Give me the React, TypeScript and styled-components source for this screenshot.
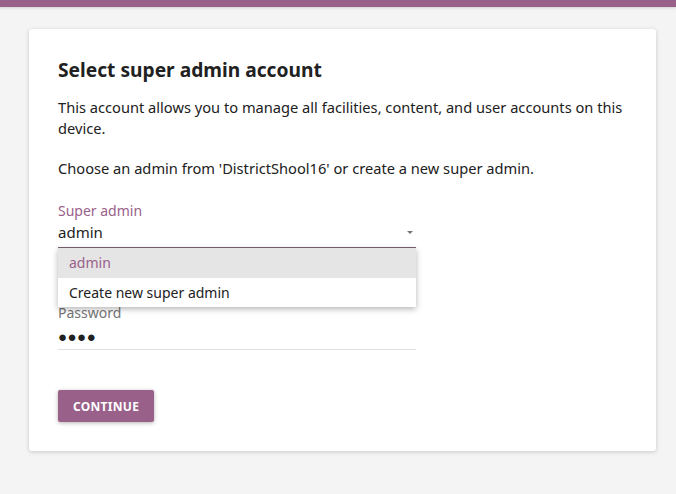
import React from 'react';
import styled, { createGlobalStyle } from 'styled-components';

const GlobalStyle = createGlobalStyle`
  body {
    margin: 0;
    background-color: #f4f4f4;
    font-family: "Noto Sans", "Open Sans", sans-serif;
    color: #212121;
  }
`;

const TopBar = styled.div`
  height: 7px;
  background-color: #996189;
  box-shadow: 0 1px 3px rgba(0, 0, 0, 0.15);
`;

const Page = styled.div`
  padding: 22px 20px 44px 29px;
`;

const Card = styled.div`
  background-color: #fff;
  border-radius: 3px;
  box-shadow: 0 1px 4px rgba(0, 0, 0, 0.18);
  padding: 26px 28px 29px 29px;
`;

const Title = styled.h1`
  margin: 0 0 12px;
  font-size: 19.2px;
  line-height: 30px;
  font-weight: 700;
  color: #212121;
`;

const Paragraph = styled.p<{ $gap?: number }>`
  margin: 0 0 ${p => p.$gap ?? 19}px;
  font-size: 14.65px;
  line-height: 21px;
  color: #212121;
`;

const Field = styled.div<{ $width?: number }>`
  position: relative;
  width: ${p => p.$width ?? 358}px;
`;

const Label = styled.div<{ $active?: boolean }>`
  font-size: 14px;
  line-height: 19px;
  color: ${p => (p.$active ? '#996189' : '#757575')};
`;

const ValueRow = styled.div<{ $active?: boolean }>`
  display: flex;
  align-items: center;
  justify-content: space-between;
  height: 24px;
  padding-bottom: 3px;
  font-size: 15px;
  line-height: 22px;
  color: #212121;
  border-bottom: 1px solid ${p => (p.$active ? '#7a6272' : '#e0e0e0')};
`;

const Caret = styled.span`
  width: 0;
  height: 0;
  margin-right: 3px;
  border-left: 3.5px solid transparent;
  border-right: 3.5px solid transparent;
  border-top: 3.5px solid #757575;
`;

const Menu = styled.ul`
  position: absolute;
  left: 0;
  right: 0;
  top: 47px;
  margin: 0;
  padding: 0;
  list-style: none;
  background-color: #fff;
  box-shadow: 0 2px 6px rgba(0, 0, 0, 0.3);
  z-index: 2;
`;

const MenuItem = styled.li<{ $selected?: boolean }>`
  height: 29.5px;
  padding: 0 11px;
  display: flex;
  align-items: center;
  font-size: 14px;
  color: ${p => (p.$selected ? '#996189' : '#212121')};
  background-color: ${p => (p.$selected ? '#e5e5e5' : '#fff')};
`;

const PasswordField = styled(Field)`
  margin-top: 55px;
`;

const Dots = styled.span`
  padding-top: 4px;
  font-size: 15px;
  letter-spacing: 0.5px;
  color: #212121;
`;

const ContinueButton = styled.button`
  margin-top: 40px;
  height: 32px;
  padding: 0 15px;
  border: none;
  border-radius: 2px;
  background-color: #996189;
  color: #fff;
  font-family: "Noto Sans", sans-serif;
  font-size: 12px;
  font-weight: 700;
  letter-spacing: 0.3px;
  text-transform: uppercase;
  box-shadow: 0 1px 4px rgba(0, 0, 0, 0.3);
  cursor: pointer;
`;

const App: React.FC = () => (
  <>
    <GlobalStyle />
    <TopBar />
    <Page>
      <Card>
        <Title>Select super admin account</Title>
        <Paragraph>
          This account allows you to manage all facilities, content, and user accounts on this
          device.
        </Paragraph>
        <Paragraph $gap={22}>
          Choose an admin from 'DistrictShool16' or create a new super admin.
        </Paragraph>
        <Field>
          <Label $active>Super admin</Label>
          <ValueRow $active>
            <span>admin</span>
            <Caret />
          </ValueRow>
          <Menu>
            <MenuItem $selected>admin</MenuItem>
            <MenuItem>Create new super admin</MenuItem>
          </Menu>
        </Field>
        <PasswordField>
          <Label>Password</Label>
          <ValueRow>
            <Dots>●●●●</Dots>
          </ValueRow>
        </PasswordField>
        <ContinueButton>Continue</ContinueButton>
      </Card>
    </Page>
  </>
);

export default App;
